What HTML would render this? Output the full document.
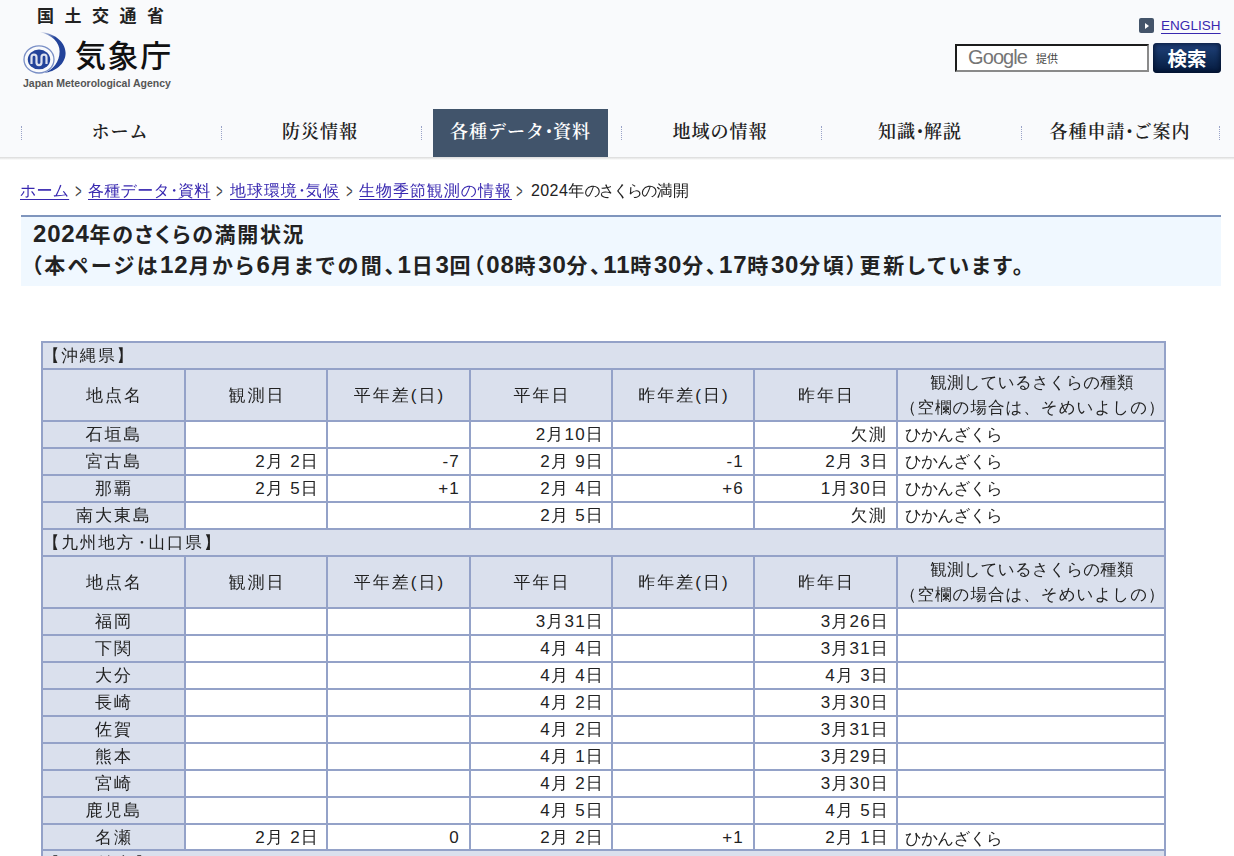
<!DOCTYPE html>
<html lang="ja">
<head>
<meta charset="utf-8">
<title>気象庁 | 2024年のさくらの満開状況</title>
<style>
html,body{margin:0;padding:0;}
body{width:1234px;height:856px;overflow:hidden;background:#fff;position:relative;
  font-family:"Liberation Sans","WenQuanYi Zen Hei","IPAGothic",sans-serif;color:#222;}
a{color:#3828b0;text-decoration:underline;}
#header{position:absolute;left:0;top:0;width:1234px;height:157px;background:#f9fafc;}
#header:after{content:"";position:absolute;left:0;top:157px;width:1234px;height:3px;background:linear-gradient(#dadada 0%,#e8e8e8 40%,#f4f4f4 75%,#fff 100%);}
#mlit{position:absolute;left:37px;top:6px;font-family:"Liberation Sans","Noto Sans CJK JP",sans-serif;
  font-weight:bold;font-size:17px;line-height:22px;letter-spacing:10.5px;color:#222;white-space:nowrap;}
#jmaname{position:absolute;left:75px;top:34px;font-family:"Liberation Sans","Noto Sans CJK JP",sans-serif;
  font-weight:500;font-size:31px;line-height:46px;letter-spacing:1.6px;color:#111;white-space:nowrap;}
#jmaen{position:absolute;left:23px;top:76px;font-family:"Liberation Sans",sans-serif;font-weight:bold;
  font-size:10.5px;line-height:14px;color:#555;white-space:nowrap;letter-spacing:0;}
#logo{position:absolute;left:20px;top:30px;width:50px;height:46px;}
#eng{position:absolute;left:1139px;top:18px;width:15px;height:15px;border-radius:2px;background:#44546a;}
#eng:after{content:"";position:absolute;left:6px;top:4.5px;border-left:4.5px solid #fff;border-top:3px solid transparent;border-bottom:3px solid transparent;}
#englink{position:absolute;left:1161px;top:17px;font-size:13.5px;line-height:18px;letter-spacing:0.05px;white-space:nowrap;text-underline-offset:2.5px;text-decoration-thickness:1px;}
#sbox{position:absolute;left:955px;top:44px;width:190px;height:24px;background:#fff;border:2px solid;
  border-color:#1c1c1c #8a8a8a #8a8a8a #1c1c1c;}
#sbox .g{position:absolute;left:11px;top:-1px;font-size:20px;line-height:24px;color:#757575;letter-spacing:-0.9px;}
#sbox .t{position:absolute;left:79px;top:4px;font-family:"Liberation Sans","Noto Sans CJK JP",sans-serif;font-size:11px;line-height:18px;color:#444;font-weight:normal;}
#sbtn{position:absolute;left:1153px;top:43px;width:68px;height:30px;border-radius:4px;
  background:linear-gradient(#21427c 0%,#13315f 45%,#051a3e 100%);box-shadow:inset 0 0 5px 1px rgba(2,14,40,.85);color:#fff;text-align:center;
  font-family:"Liberation Sans","Noto Sans CJK JP",sans-serif;font-weight:bold;font-size:19.5px;line-height:32px;letter-spacing:0;}
#nav{position:absolute;left:20px;top:109px;width:1200px;height:48px;}
#nav div{position:absolute;top:0;width:200px;height:48px;text-align:center;
  font-family:"Liberation Serif","Noto Serif CJK JP","Noto Serif CJK SC",serif;font-weight:600;font-size:18px;line-height:46px;
  letter-spacing:1px;color:#222;white-space:nowrap;}
#nav .d{margin:0 -5px;letter-spacing:0;}
#nav i{position:absolute;top:17px;width:0;height:14px;border-left:1px dotted #9aa3c8;}
#nav div.on{left:413px;width:175px;background:#41546b;color:#fff;}
#crumb{position:absolute;left:0;top:180px;font-size:16px;line-height:21px;white-space:nowrap;color:#222;}
#crumb a,#crumb>span{position:absolute;top:0;letter-spacing:0;}
#crumb>span{color:#444;font-size:15px;transform:scale(.72,1.3);transform-origin:50% 58%;}
#crumb a{text-underline-offset:3px;text-decoration-thickness:1px;}
#c5{transform:none!important}
#crumb .d{margin:0 -4px;letter-spacing:0;}
#c1{left:20px;letter-spacing:.13px!important}#g1{left:73.7px;top:1px!important}#c2{left:88px;letter-spacing:.25px!important}#g2{left:214.7px;top:1px!important}#c3{left:230px;letter-spacing:.94px!important}#g3{left:344.8px;top:1px!important}#c4{left:359px;letter-spacing:.95px!important}#g4{left:515px;top:1px!important}#c5{left:531px;letter-spacing:.4px!important;font-size:16px!important;color:#222!important}#c5 .k{letter-spacing:-2.2px;margin-right:1px;}
#ttl{position:absolute;left:21px;top:215px;width:1200px;height:69px;border-top:2px solid #7f95bd;background:#f0f8ff;}
#ttl .n{font-size:24px;letter-spacing:.8px;line-height:0;}
#ttl div{position:absolute;left:12px;font-weight:bold;font-size:21px;line-height:31px;white-space:nowrap;color:#222;
  font-family:"Liberation Sans","Noto Sans CJK JP",sans-serif;font-feature-settings:"palt";letter-spacing:2px;}
table{position:absolute;left:41px;top:341px;border-collapse:collapse;table-layout:fixed;width:1125px;
  font-size:16.5px;letter-spacing:1.5px;color:#222;}
td,th{border:2px solid #94a2c8;padding:0;height:25px;line-height:25px;font-weight:normal;white-space:nowrap;overflow:hidden;}
th,td.n,td.s{background:#dae0ed;}
td.s{text-align:left;padding-left:0;letter-spacing:1.9px;}
th{height:50px;line-height:24px;text-align:center;font-size:17px;letter-spacing:2px;padding:0 0 0 2px;}
th .a,th .b{font-size:16.5px;}
th.o{padding-top:2px;height:48px;}
td .d{margin:0 -1.5px;letter-spacing:0;}
tr.last td{padding-top:2px;height:22px;line-height:22px;}
td.n{text-align:center;font-size:17px;letter-spacing:2px;padding-left:1px;}
td.r{text-align:right;padding-right:7px;font-size:17px;letter-spacing:1.2px;}
td.r.k{padding-right:9px;}
td.l{text-align:left;padding-left:7px;letter-spacing:-.7px;}
th .a{letter-spacing:.2px}
th .b{letter-spacing:1px}
</style>
</head>
<body>
<div id="header">
  <div id="mlit">国土交通省</div>
  <svg id="logo" viewBox="0 0 50 46">
    <defs><linearGradient id="cg" x1="19" y1="2" x2="34" y2="10" gradientUnits="userSpaceOnUse"><stop offset="0" stop-color="#23439a" stop-opacity="0"/><stop offset="1" stop-color="#23439a"/></linearGradient></defs>
    <path d="M19.3 1.7 C33 2.5 45.6 11 45.6 23 C45.6 34 35 42 24.4 42.8 C33 40 39.6 32 39.6 21.5 C39.6 12 32 5 19.3 1.7 Z" fill="url(#cg)"/>
    <ellipse cx="19" cy="29.4" rx="15" ry="13.6" fill="none" stroke="#7a8fc6" stroke-width="1.3"/>
    <ellipse cx="19" cy="29.4" rx="11.2" ry="9.9" fill="#23439a"/>
    <path d="M11.5 34 V27.2 a2.5 2.5 0 0 1 5 0 V32.6 a2.5 2.5 0 0 0 5 0 V27.2 a2.5 2.5 0 0 1 5 0 V34" fill="none" stroke="#dde1ee" stroke-width="2.2"/>
  </svg>
  <div id="jmaname">気象庁</div>
  <div id="jmaen">Japan Meteorological Agency</div>
  <div id="eng"></div>
  <a id="englink">ENGLISH</a>
  <div id="sbox"><span class="g">Google</span><span class="t">提供</span></div>
  <div id="sbtn">検索</div>
  <div id="nav">
    <i style="left:1px"></i><i style="left:201px"></i><i style="left:401px"></i><i style="left:601px"></i><i style="left:801px"></i><i style="left:1001px"></i><i style="left:1199px"></i>
    <div style="left:0">ホーム</div>
    <div style="left:200px">防災情報</div>
    <div class="on">各種データ<span class="d">・</span>資料</div>
    <div style="left:600px">地域の情報</div>
    <div style="left:800px">知識<span class="d">・</span>解説</div>
    <div style="left:1000px">各種申請<span class="d">・</span>ご案内</div>
  </div>
</div>
<div id="crumb"><a id="c1">ホーム</a><span id="g1">&gt;</span><a id="c2">各種データ<span class="d">・</span>資料</a><span id="g2">&gt;</span><a id="c3">地球環境<span class="d">・</span>気候</a><span id="g3">&gt;</span><a id="c4">生物季節観測の情報</a><span id="g4">&gt;</span><span id="c5">2024年<span class="k">のさくらの</span>満開</span></div>
<div id="ttl">
  <div style="top:2px;letter-spacing:1.68px"><span class="n">2024</span>年のさくらの満開状況</div>
  <div style="top:33px;left:10px;letter-spacing:2.63px">（本ページは<span class="n">12</span>月から<span class="n">6</span>月までの間、<span class="n">1</span>日<span class="n">3</span>回（<span class="n">08</span>時<span class="n">30</span>分、<span class="n">11</span>時<span class="n">30</span>分、<span class="n">17</span>時<span class="n">30</span>分頃）更新しています。</div>
</div>
<table>
<colgroup><col style="width:143px"><col style="width:142px"><col style="width:143px"><col style="width:142px"><col style="width:142px"><col style="width:143px"><col style="width:268px"></colgroup>
<tr><td class="s" colspan="7">【沖縄県】</td></tr>
<tr><th class="o">地点名</th><th class="o">観測日</th><th class="o">平年差(日)</th><th class="o">平年日</th><th class="o">昨年差(日)</th><th class="o">昨年日</th><th><span class="a">観測しているさくらの種類</span><br><span class="b">（空欄の場合は、そめいよしの）</span></th></tr>
<tr><td class="n">石垣島</td><td class="r"></td><td class="r"></td><td class="r">2月10日</td><td class="r"></td><td class="r k">欠測</td><td class="l">ひかんざくら</td></tr>
<tr><td class="n">宮古島</td><td class="r">2月 2日</td><td class="r k">-7</td><td class="r">2月 9日</td><td class="r k">-1</td><td class="r">2月 3日</td><td class="l">ひかんざくら</td></tr>
<tr><td class="n">那覇</td><td class="r">2月 5日</td><td class="r k">+1</td><td class="r">2月 4日</td><td class="r k">+6</td><td class="r">1月30日</td><td class="l">ひかんざくら</td></tr>
<tr><td class="n">南大東島</td><td class="r"></td><td class="r"></td><td class="r">2月 5日</td><td class="r"></td><td class="r k">欠測</td><td class="l">ひかんざくら</td></tr>
<tr><td class="s" colspan="7">【九州地方<span class="d">・</span>山口県】</td></tr>
<tr><th class="o">地点名</th><th class="o">観測日</th><th class="o">平年差(日)</th><th class="o">平年日</th><th class="o">昨年差(日)</th><th class="o">昨年日</th><th><span class="a">観測しているさくらの種類</span><br><span class="b">（空欄の場合は、そめいよしの）</span></th></tr>
<tr><td class="n">福岡</td><td class="r"></td><td class="r"></td><td class="r">3月31日</td><td class="r"></td><td class="r">3月26日</td><td class="l"></td></tr>
<tr><td class="n">下関</td><td class="r"></td><td class="r"></td><td class="r">4月 4日</td><td class="r"></td><td class="r">3月31日</td><td class="l"></td></tr>
<tr><td class="n">大分</td><td class="r"></td><td class="r"></td><td class="r">4月 4日</td><td class="r"></td><td class="r">4月 3日</td><td class="l"></td></tr>
<tr><td class="n">長崎</td><td class="r"></td><td class="r"></td><td class="r">4月 2日</td><td class="r"></td><td class="r">3月30日</td><td class="l"></td></tr>
<tr><td class="n">佐賀</td><td class="r"></td><td class="r"></td><td class="r">4月 2日</td><td class="r"></td><td class="r">3月31日</td><td class="l"></td></tr>
<tr><td class="n">熊本</td><td class="r"></td><td class="r"></td><td class="r">4月 1日</td><td class="r"></td><td class="r">3月29日</td><td class="l"></td></tr>
<tr><td class="n">宮崎</td><td class="r"></td><td class="r"></td><td class="r">4月 2日</td><td class="r"></td><td class="r">3月30日</td><td class="l"></td></tr>
<tr><td class="n">鹿児島</td><td class="r"></td><td class="r"></td><td class="r">4月 5日</td><td class="r"></td><td class="r">4月 5日</td><td class="l"></td></tr>
<tr class="last"><td class="n">名瀬</td><td class="r">2月 2日</td><td class="r k">0</td><td class="r">2月 2日</td><td class="r k">+1</td><td class="r">2月 1日</td><td class="l">ひかんざくら</td></tr>
<tr><td class="s" colspan="7">【四国地方】</td></tr>
<tr><th class="o">地点名</th><th class="o">観測日</th><th class="o">平年差(日)</th><th class="o">平年日</th><th class="o">昨年差(日)</th><th class="o">昨年日</th><th><span class="a">観測しているさくらの種類</span><br><span class="b">（空欄の場合は、そめいよしの）</span></th></tr>
</table>
</body>
</html>
